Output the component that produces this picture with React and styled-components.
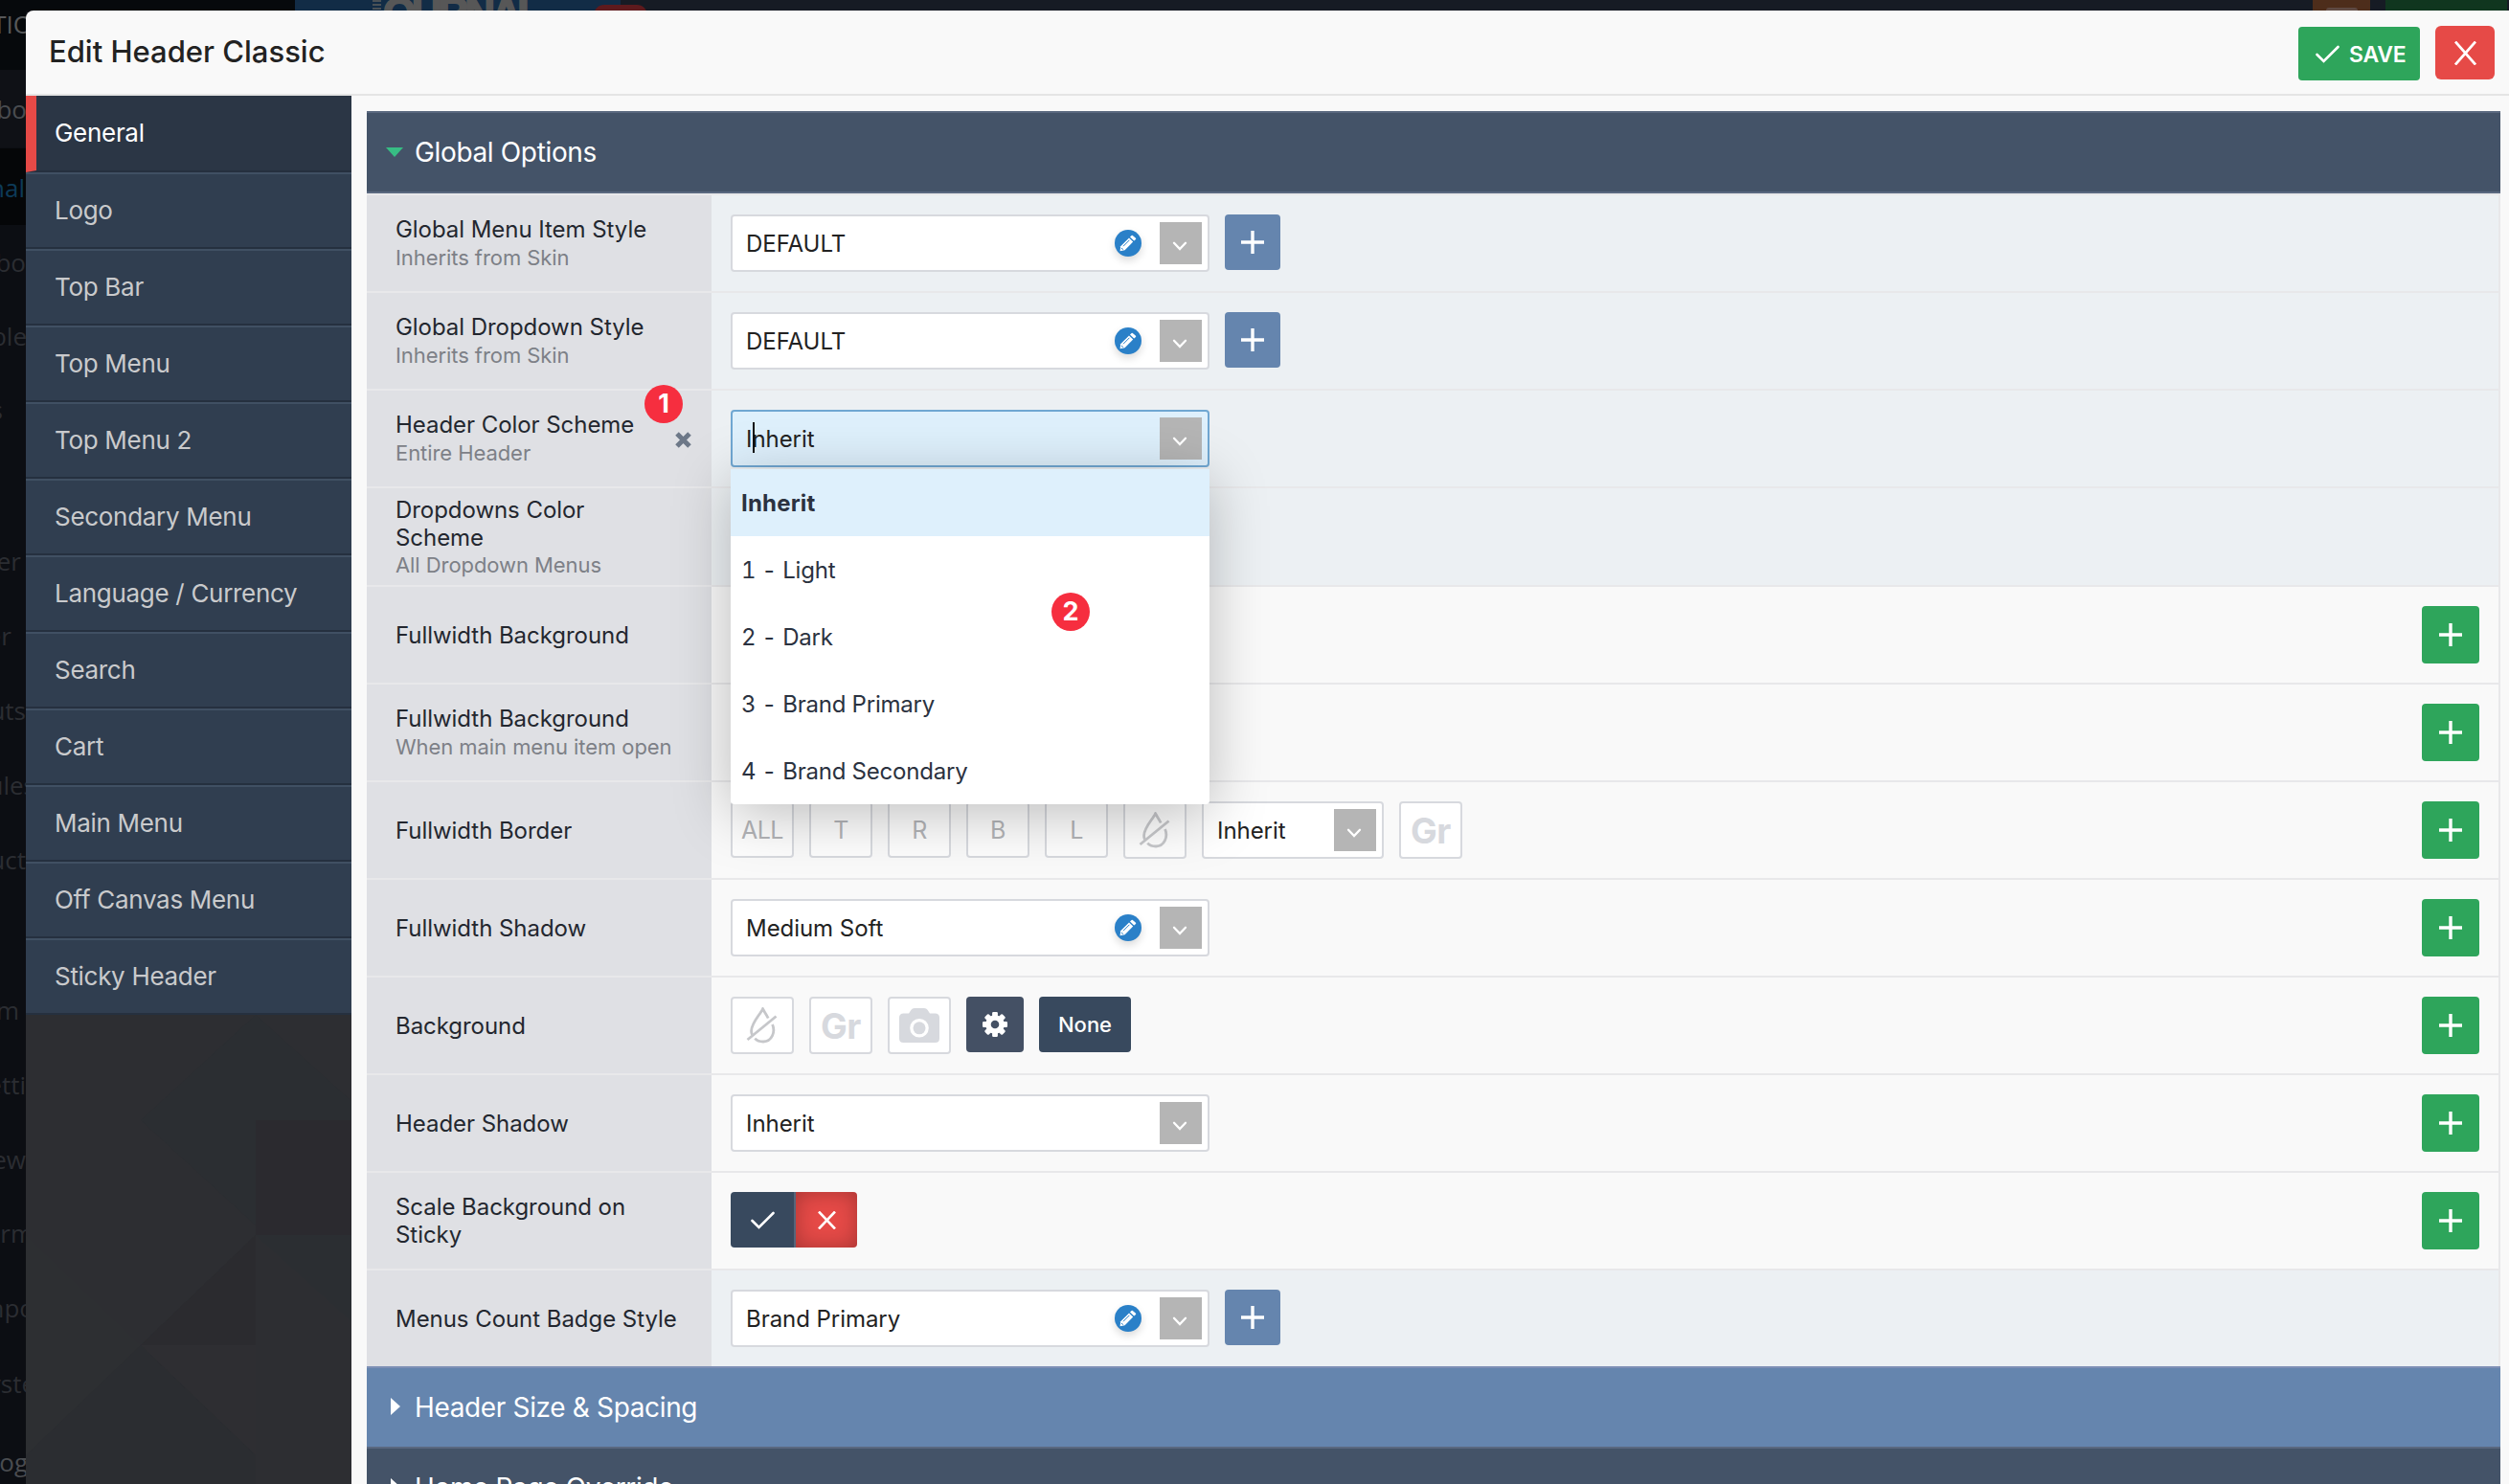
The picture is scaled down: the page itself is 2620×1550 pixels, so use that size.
import React from "react";
import styled, { createGlobalStyle } from "styled-components";

const GlobalStyle = createGlobalStyle`
* {
    box-sizing: border-box;
}
body {
    margin: 0;
    width: 2620px;
    height: 1550px;
    overflow: hidden;
    background: #0c0e13;
    font-family: Inter, "Liberation Sans", sans-serif;
}
`;

const Screen = styled.div`
    position: relative;
    width: 2620px;
    height: 1550px;
    overflow: hidden;
    background: #0c0e13;
    padding: 11px 0 0 27px;
`;

// the dimmed admin page that shows round the modal
const Behind = styled.div`
    position: absolute;
    left: 0;
    top: 0;
    width: 2620px;
    height: 1550px;
    overflow: hidden;
    background: linear-gradient(90deg, #06090c 308px, #122c46 308px, #122c46 648px, #161b24 648px);
    background-size: 2620px 11px;
    background-repeat: no-repeat;
    font-family: "Open Sans", sans-serif;
`;

const BehindText = styled.div`
    position: absolute;
    top: ${(p) => p.$y}px;
    right: ${(p) => 2620 - p.$x}px;
    font-size: 26px;
    line-height: 36px;
    color: ${(p) => p.$color || "#2b2d32"};
    white-space: nowrap;
`;

const BehindBand = styled.div`
    position: absolute;
    left: 0;
    width: 27px;
    top: ${(p) => p.$y}px;
    height: ${(p) => p.$h}px;
    background: ${(p) => p.$color};
`;

const BehindLogo = styled.div`
    position: absolute;
    left: 400px;
    top: -8px;
    font: bold 44px/44px "Liberation Sans", sans-serif;
    letter-spacing: -4.2px;
    color: #575757;
    -webkit-text-stroke: 2px #575757;
`;

const BehindBlock = styled.div`
    position: absolute;
    left: ${(p) => p.$x}px;
    top: ${(p) => p.$y || 0}px;
    width: ${(p) => p.$w}px;
    height: ${(p) => p.$h || 11}px;
    border-radius: ${(p) => p.$r || 0};
    background: ${(p) => p.$color};
`;

const Modal = styled.div`
    position: relative;
    display: flex;
    flex-direction: column;
    height: 1539px;
    background: #f9f9f9;
    border-top-left-radius: 8px;
    overflow: hidden;
`;

const ModalHeader = styled.header`
    display: flex;
    flex: none;
    align-items: flex-start;
    height: 89px;
    padding: 16px 15px 0 24px;
    border-bottom: 2px solid #e5e5e5;
`;

const Title = styled.h1`
    flex: 1;
    margin: 0;
    padding-top: 7px;
    font-size: 31px;
    line-height: 40px;
    font-weight: 500;
    letter-spacing: 0;
    color: #222;
`;

const SaveButton = styled.button`
    display: flex;
    align-items: center;
    gap: 10px;
    width: 127px;
    height: 56px;
    margin: 1px 16px 0 0;
    padding: 1px 0 0 18px;
    border: 0;
    border-radius: 4px;
    background: #2ea55b;
    color: #fff;
    font: 600 23px Inter, sans-serif;
    letter-spacing: -0.2px;
`;

const CloseButton = styled.button`
    display: flex;
    align-items: center;
    justify-content: center;
    width: 62px;
    height: 56px;
    padding: 0;
    border: 0;
    border-radius: 6px;
    background: #e64a47;
    color: #fff;
`;

const ModalBody = styled.div`
    display: flex;
    flex: 1;
    min-height: 0;
`;

const Sidebar = styled.nav`
    flex: none;
    width: 340px;
    background: #2c2d31;
`;

const SideItem = styled.div`
    display: flex;
    align-items: center;
    height: 80px;
    padding-left: ${(p) => (p.$active ? 19 : 30)}px;
    padding-bottom: ${(p) => (p.$active ? 2 : 1)}px;
    border-left: ${(p) => (p.$active ? "11px solid #e64a47" : "0")};
    border-top: ${(p) => (p.$active ? "0" : "2px solid #405063")};
    border-bottom: 2px solid #25303f;
    background: ${(p) => (p.$active ? "#2b3645" : "#303e50")};
    color: ${(p) => (p.$active ? "#fff" : "#c9cacc")};
    font-size: 26px;
    letter-spacing: -0.3px;
`;

const SidePattern = styled.svg`
    display: block;
`;

const Content = styled.main`
    flex: 1;
    min-width: 0;
    padding: 16px 9px 0 16px;
    overflow: hidden;
`;

const SectionBar = styled.div`
    display: flex;
    align-items: center;
    gap: ${(p) => (p.$open ? 12 : 15)}px;
    height: ${(p) => (p.$open ? 86 : 84)}px;
    padding: 0 0 0 ${(p) => (p.$open ? 20 : 25)}px;
    border-top: 2px solid ${(p) => (p.$blue ? "#7d8fb5" : "#5a687f")};
    border-bottom: ${(p) => (p.$open ? "2px solid #5a687f" : "0")};
    background: ${(p) => (p.$blue ? "#6585ae" : "#445368")};
    color: #fff;
    font-size: 28px;
    letter-spacing: -0.35px;
`;

const ArrowDown = styled.span`
    border: 9px solid transparent;
    border-top: 10px solid #37bd84;
    border-bottom: 0;
`;

const ArrowRight = styled.span`
    border: 9px solid transparent;
    border-left: 10px solid #fff;
    border-right: 0;
    margin-top: -3px;
`;

const Row = styled.div`
    display: flex;
    height: ${(p) => (p.$tall ? 103 : 102)}px;
    border-top: 2px solid #e8e8ea;
    border-right: 2px solid #e8e8ea;
    background: ${(p) => (p.$tint ? "#ecf0f3" : "#f9f9f9")};
`;

const Label = styled.div`
    position: relative;
    display: flex;
    flex: none;
    flex-direction: column;
    justify-content: center;
    width: 360px;
    padding: ${(p) => (p.$hinted ? 1 : 0)}px 60px 0 30px;
    background: #dfe0e4;
    color: #23272f;
    font-size: 24px;
    line-height: 29px;
    letter-spacing: -0.05px;
    white-space: ${(p) => (p.$wrap ? "normal" : "nowrap")};
`;

const Hint = styled.small`
    margin-top: ${(p) => (p.$tight ? 0 : 1)}px;
    font-size: 22px;
    line-height: 29px;
    letter-spacing: -0.07px;
    color: #7d8087;
    white-space: nowrap;
`;

const ClearMark = styled.svg`
    position: absolute;
    right: 21px;
    top: 43px;
`;

const Controls = styled.div`
    display: flex;
    flex: 1;
    align-items: flex-start;
    gap: 16px;
    padding: 20px 20px 0 20px;
`;

const SelectBox = styled.div`
    position: relative;
    display: flex;
    align-items: center;
    width: ${(p) => p.$width || 500}px;
    height: 60px;
    padding: 0 6px 0 14px;
    border: 2px solid ${(p) => (p.$focus ? "#70a7d2" : "#d7d9de")};
    border-radius: 4px;
    background: ${(p) => (p.$focus ? "#def0fc" : "#fff")};
    color: #222;
    font-size: 24px;
    letter-spacing: -0.05px;
`;

const SelectText = styled.span`
    flex: 1;
    padding-top: 1px;
`;

const Caret = styled.span`
    position: absolute;
    left: 21px;
    top: 11px;
    width: 2px;
    height: 32px;
    background: #111;
`;

const EditDot = styled.span`
    display: flex;
    align-items: center;
    justify-content: center;
    width: 28px;
    height: 28px;
    margin-right: 19px;
    border-radius: 50%;
    background: #2a80c8;
    box-shadow: 0 4px 8px rgba(0, 0, 0, 0.15);
`;

const Handle = styled.span`
    display: flex;
    align-items: center;
    justify-content: center;
    width: 44px;
    height: 44px;
    padding: 6px 2px 0 0;
    background: #b5b5b5;
`;

const Square = styled.button`
    display: flex;
    align-items: center;
    justify-content: center;
    width: ${(p) => p.$w}px;
    height: ${(p) => p.$h || 58}px;
    margin-left: ${(p) => (p.$push ? "auto" : "0")};
    padding: 0;
    border: 0;
    border-radius: 4px;
    background: ${(p) => p.$bg};
    color: #fff;
    font: 500 22px Inter, sans-serif;
`;

const Outline = styled.button`
    display: flex;
    align-items: center;
    justify-content: center;
    width: 66px;
    height: ${(p) => p.$h || 60}px;
    padding: 0;
    border: 2px solid #d7d9de;
    border-radius: 4px;
    background: ${(p) => (p.$soft ? "#fdfdfd" : "#fff")};
    color: ${(p) => (p.$heavy ? "#d7d9de" : "#b3b4b7")};
    font: ${(p) => (p.$heavy ? "700 37px" : "400 25px")} Inter, sans-serif;
    letter-spacing: -0.5px;
`;

const Toggle = styled.div`
    display: flex;
    height: 58px;
    border-radius: 4px;
    overflow: hidden;
`;

const ToggleHalf = styled.div`
    display: flex;
    align-items: center;
    justify-content: center;
    width: ${(p) => (p.$off ? 64 : 68)}px;
    background: ${(p) => (p.$off ? "#e64a47" : "#38495e")};
    border-right: ${(p) => (p.$off ? "0" : "2px solid #56657a")};
    box-shadow: ${(p) => (p.$off ? "inset 0 0 22px rgba(0, 0, 0, 0.28)" : "none")};
`;

const Menu = styled.div`
    position: absolute;
    z-index: 5;
    left: -2px;
    top: 60px;
    width: 500px;
    border-radius: 0 0 4px 4px;
    background: #fff;
    box-shadow: 0 10px 60px rgba(0, 0, 0, 0.25);
`;

const MenuItem = styled.div`
    height: 70px;
    padding: 1px 0 0 11px;
    line-height: 70px;
    background: ${(p) => (p.$selected ? "#def0fc" : "transparent")};
    color: #2b3240;
    font-weight: ${(p) => (p.$selected ? 700 : 400)};
    font-size: 24px;
    font-variant-numeric: tabular-nums;
    letter-spacing: ${(p) => (p.$selected ? 0.2 : -0.2)}px;
`;

const Pin = styled.span`
    position: absolute;
    z-index: 9;
    left: ${(p) => p.$x}px;
    top: ${(p) => p.$y}px;
    width: 40px;
    height: 40px;
    border-radius: 50%;
    background: #f62e3f;
    color: #fff;
    font: 700 27px/40px Inter, sans-serif;
    text-align: center;
`;

const Plus = () => (
    <svg width="24" height="24" viewBox="0 0 24 24" stroke="#fff" strokeWidth="3.4">
        <path d="M12 0V24M0 12H24" />
    </svg>
);

const Chevron = () => (
    <svg width="16" height="10" viewBox="0 0 16 10" fill="none" stroke="#fff" strokeWidth="2.3" strokeLinecap="round">
        <path d="M2 1.8L8 8L14 1.8" />
    </svg>
);

const Check = () => (
    <svg width="25" height="19" viewBox="0 0 25 19" fill="none" stroke="#fff" strokeWidth="2.6" strokeLinecap="round">
        <path d="M1.5 10L8.5 17L23.5 2" />
    </svg>
);

const Cross = ({ width, height, stroke = 2.6 }) => (
    <svg width={width} height={height} viewBox={`0 0 ${width} ${height}`} fill="none" stroke="#fff" strokeWidth={stroke}>
        <path d={`M1 0.5L${width - 1} ${height - 0.5}M${width - 1} 0.5L1 ${height - 0.5}`} />
    </svg>
);

const Pencil = () => (
    <svg width="18" height="18" viewBox="0 0 18 18" fill="#fff">
        <path d="M1.2 12.2L10 3.6L14.2 7.6L5.6 16.2L0.6 17.2Z" />
        <path d="M11 2.6L12.6 1Q13.2 0.5 13.8 1L17 3.8Q17.5 4.4 17 5L15.2 6.6Z" />
        <path d="M4 12.2L10.4 5.8M2 14L3.8 15.6" stroke="#2a80c8" strokeWidth="1" />
    </svg>
);

const NoDrop = () => (
    <svg width="34" height="38" viewBox="0 0 34 38" fill="none" stroke="#c6c7ca" strokeWidth="2.8">
        <path d="M23.2 11.5C21.5 8 19 4.5 17.5 1.8C14.5 8 6 16 5.6 24.5C5.5 26 5.8 27.4 6.4 28.8" />
        <path d="M27.6 18C31 26 27 35.6 18 36C14.5 36 11.5 35 9.3 32.6" />
        <path d="M1.5 34L31.5 9.5" />
    </svg>
);

const Camera = () => (
    <svg width="42" height="36" viewBox="0 0 42 36" fill="#d7d9de">
        <path
            fillRule="evenodd"
            d="M4.5 5.5H10L12.5 1.8Q13.5 0 16 0H26Q28.5 0 29.5 1.8L32 5.5H37.5Q42 5.5 42 10V31.5Q42 36 37.5 36H4.5Q0 36 0 31.5V10Q0 5.5 4.5 5.5ZM21 11A9.8 9.8 0 1 0 21 30.6A9.8 9.8 0 1 0 21 11Z"
        />
        <circle cx="21" cy="20.8" r="6.5" />
    </svg>
);

const Gear = () => (
    <svg width="26" height="26" viewBox="-13 -13 26 26" fill="#fff">
        {[0, 45, 90, 135].map((deg) => (
            <rect key={deg} x="-2.9" y="-13" width="5.8" height="26" rx="1.2" transform={`rotate(${deg})`} />
        ))}
        <circle r="9.8" />
        <circle r="4.3" fill="#445064" />
    </svg>
);

const Select = ({ value, width, edit, focus, children }) => (
    <SelectBox $width={width} $focus={focus}>
        <SelectText>{value}</SelectText>
        {focus && <Caret />}
        {edit && (
            <EditDot>
                <Pencil />
            </EditDot>
        )}
        <Handle>
            <Chevron />
        </Handle>
        {children}
    </SelectBox>
);

const AddBlue = () => (
    <Square $w={58} $bg="#6585ae">
        <Plus />
    </Square>
);

const AddGreen = () => (
    <Square $w={60} $h={60} $bg="#2ea55b" $push>
        <Plus />
    </Square>
);

const Option = ({ name, hint, tint, wrap, tall, mark, children }) => (
    <Row $tint={tint} $tall={tall}>
        <Label $wrap={wrap} $hinted={!!hint}>
            {name}
            {hint && <Hint $tight={tall}>{hint}</Hint>}
            {mark}
        </Label>
        <Controls>
            {children}
            {!tint && <AddGreen />}
        </Controls>
    </Row>
);

const sideItems = [
    "General",
    "Logo",
    "Top Bar",
    "Top Menu",
    "Top Menu 2",
    "Secondary Menu",
    "Language / Currency",
    "Search",
    "Cart",
    "Main Menu",
    "Off Canvas Menu",
    "Sticky Header",
];

const schemes = ["Inherit", "1 - Light", "2 - Dark", "3 - Brand Primary", "4 - Brand Secondary"];

const behindTexts = [
    { t: "NAVIGATIO", x: 34, y: 7, color: "#56585a" },
    { t: "Dashbo", x: 28, y: 96, color: "#4a4c50" },
    { t: "Journal", x: 26, y: 178, color: "#0d3a57" },
    { t: "Dashbo", x: 27, y: 256 },
    { t: "Variable", x: 28, y: 333 },
    { t: "Skins", x: 3, y: 410 },
    { t: "Header", x: 22, y: 568 },
    { t: "Footer", x: 12, y: 646 },
    { t: "Layouts", x: 27, y: 724 },
    { t: "Modules", x: 37, y: 802 },
    { t: "Product", x: 27, y: 880 },
    { t: "System", x: 20, y: 1037 },
    { t: "Setti", x: 27, y: 1115 },
    { t: "New", x: 27, y: 1193 },
    { t: "Form", x: 35, y: 1270 },
    { t: "Impo", x: 36, y: 1348 },
    { t: "Syste", x: 37, y: 1427 },
    { t: "Blog", x: 29, y: 1509, color: "#4a4c50" },
];

const App = () => {
    return (
        <Screen>
            <GlobalStyle />
            <Behind>
                <BehindBand $y={11} $h={62} $color="#06090c" />
                <BehindBand $y={73} $h={81} $color="#0f1116" />
                <BehindBand $y={155} $h={80} $color="#050608" />
                {behindTexts.map((b) => (
                    <BehindText key={b.y} $x={b.x} $y={b.y} $color={b.color}>
                        {b.t}
                    </BehindText>
                ))}
                <BehindBlock $x={389} $w={9} $h={2} $color="#4a5156" />
                <BehindBlock $x={389} $y={4} $w={9} $h={2} $color="#4a5156" />
                <BehindBlock $x={389} $y={8} $w={9} $h={2} $color="#4a5156" />
                <BehindLogo>OURNAL</BehindLogo>
                <BehindBlock $x={620} $y={5} $w={56} $r="18px 18px 0 0" $color="#5e1a1d" />
                <BehindBlock $x={2415} $w={60} $color="#4d2d1b" />
                <BehindBlock $x={2429} $y={8} $w={33} $r="3px 3px 0 0" $color="#5f4a43" />
                <BehindBlock $x={2491} $w={127} $color="#10361f" />
            </Behind>
            <Modal>
                <ModalHeader>
                    <Title>Edit Header Classic</Title>
                    <SaveButton>
                        <Check /> SAVE
                    </SaveButton>
                    <CloseButton>
                        <Cross width={23} height={25} stroke={2.7} />
                    </CloseButton>
                </ModalHeader>
                <ModalBody>
                    <Sidebar>
                        {sideItems.map((item, i) => (
                            <SideItem key={item} $active={i === 0}>
                                {item}
                            </SideItem>
                        ))}
                        <SidePattern width="340" height="490">
                            <path d="M0 0H340V490H0Z" fill="#2d2e32" />
                            <path d="M120 110L240 0L340 90V110H240V220Z" fill="#2b2e32" />
                            <path d="M240 110H340V230H240Z" fill="#2b2a2f" />
                            <path d="M120 230H240L120 345Z" fill="#2d2e32" />
                            <path d="M120 345L240 230V345Z" fill="#2b2b2f" />
                            <path d="M0 230L120 345L0 470Z" fill="#2d2f32" />
                            <path d="M120 345L240 460V490H0V460Z" fill="#2b2d31" />
                            <path d="M120 345H240V460Z" fill="#2e2e32" />
                            <path d="M240 230H340V320Z" fill="#2b2e32" />
                        </SidePattern>
                    </Sidebar>
                    <Content>
                        <SectionBar $open>
                            <ArrowDown />
                            Global Options
                        </SectionBar>
                        <Option name="Global Menu Item Style" hint="Inherits from Skin" tint>
                            <Select value="DEFAULT" edit />
                            <AddBlue />
                        </Option>
                        <Option name="Global Dropdown Style" hint="Inherits from Skin" tint>
                            <Select value="DEFAULT" edit />
                            <AddBlue />
                        </Option>
                        <Option
                            name="Header Color Scheme"
                            hint="Entire Header"
                            tint
                            mark={
                                <ClearMark width="17" height="17" viewBox="0 0 17 17" stroke="#6d7888" strokeWidth="5">
                                    <path d="M2 2L15 15M15 2L2 15" />
                                </ClearMark>
                            }
                        >
                            <Select value="Inherit" focus>
                                <Menu>
                                    {schemes.map((s, i) => (
                                        <MenuItem key={s} $selected={i === 0}>
                                            {s}
                                        </MenuItem>
                                    ))}
                                </Menu>
                            </Select>
                        </Option>
                        <Option name="Dropdowns Color Scheme" hint="All Dropdown Menus" tint wrap tall />
                        <Option name="Fullwidth Background" />
                        <Option name="Fullwidth Background" hint="When main menu item open" />
                        <Option name="Fullwidth Border">
                            {["ALL", "T", "R", "B", "L"].map((side) => (
                                <Outline key={side} $h={59} $soft>
                                    {side}
                                </Outline>
                            ))}
                            <Outline $soft>
                                <NoDrop />
                            </Outline>
                            <Select value="Inherit" width={190} />
                            <Outline $heavy>Gr</Outline>
                        </Option>
                        <Option name="Fullwidth Shadow">
                            <Select value="Medium Soft" edit />
                        </Option>
                        <Option name="Background">
                            <Outline>
                                <NoDrop />
                            </Outline>
                            <Outline $heavy>Gr</Outline>
                            <Outline>
                                <Camera />
                            </Outline>
                            <Square $w={60} $bg="#445064">
                                <Gear />
                            </Square>
                            <Square $w={96} $bg="#38495e">
                                None
                            </Square>
                        </Option>
                        <Option name="Header Shadow">
                            <Select value="Inherit" />
                        </Option>
                        <Option name="Scale Background on Sticky" wrap>
                            <Toggle>
                                <ToggleHalf>
                                    <Check />
                                </ToggleHalf>
                                <ToggleHalf $off>
                                    <Cross width={19} height={19} />
                                </ToggleHalf>
                            </Toggle>
                        </Option>
                        <Option name="Menus Count Badge Style" tint>
                            <Select value="Brand Primary" edit />
                            <AddBlue />
                        </Option>
                        <SectionBar $blue>
                            <ArrowRight />
                            Header Size &amp; Spacing
                        </SectionBar>
                        <SectionBar>
                            <ArrowRight />
                            Home Page Override
                        </SectionBar>
                    </Content>
                </ModalBody>
            </Modal>
            <Pin $x={673} $y={402}>1</Pin>
            <Pin $x={1098} $y={619}>2</Pin>
        </Screen>
    );
};

export default App;
